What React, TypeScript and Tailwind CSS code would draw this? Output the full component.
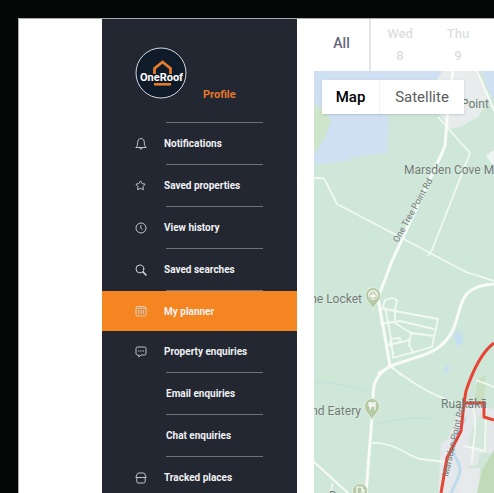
import React from "react";
import { Star } from "lucide-react";

type MenuItem = {
  label: string;
  icon?: React.ReactNode;
  active?: boolean;
  sub?: boolean;
};

const BellIcon = () => (
  <svg width="12" height="12" viewBox="0 0 12 12" fill="none" stroke="currentColor" strokeWidth="0.9" strokeLinejoin="round">
    <path d="M6 .6C3.500.6 2.700 2.500 2.700 4.500c0 2.500-.7 3.800-1.900 5h10.400c-1.200-1.200-1.900-2.500-1.900-5C9.300 2.500 8.500.6 6 .6z" />
    <path d="M4.800 9.700q.2 1.500 1.200 1.500t1.200-1.500" />
  </svg>
);

const ClockIcon = () => (
  <svg width="12" height="12" viewBox="0 0 12 12" fill="none" stroke="currentColor" strokeWidth="0.9">
    <circle cx="6" cy="6" r="5" />
    <path d="M5.800 3.200V6.200l1.600 1.300" />
  </svg>
);

const SearchIcon = () => (
  <svg width="12" height="12" viewBox="0 0 12 12" fill="none" stroke="currentColor" strokeLinecap="round">
    <circle cx="4.900" cy="4.900" r="3.900" strokeWidth="1" />
    <path d="M7.900 7.900 11 11" strokeWidth="1.500" />
  </svg>
);

const PlannerIcon = () => (
  <svg width="12" height="12" viewBox="0 0 12 12" fill="none" stroke="currentColor" strokeWidth="0.9">
    <rect x="1" y="1.500" width="10" height="9.500" rx="1.500" />
    <path d="M1 3.300h10M3.700 5v4M6 5v4M8.300 5v4" />
  </svg>
);

const ChatIcon = () => (
  <svg width="12" height="12" viewBox="0 0 12 12" fill="none" stroke="currentColor" strokeWidth="0.9">
    <path d="M2.500 1h7A1.500 1.500 0 0 1 11 2.500v5A1.500 1.500 0 0 1 9.500 9H6L3.800 11V9H2.500A1.500 1.500 0 0 1 1 7.500v-5A1.500 1.500 0 0 1 2.500 1z" />
    <path d="M3 5h1.400M5.300 5h1.400M7.600 5H9" />
  </svg>
);

const PlacesIcon = () => (
  <svg width="12" height="12" viewBox="0 0 12 12" fill="none" stroke="currentColor" strokeWidth="0.9">
    <path d="M.8 5.500 2.200 2Q2.600 1 3.600 1h4.800q1 0 1.400 1l1.400 3.500zM1.800 6v3.500Q1.800 11 3.200 11h5.600q1.400 0 1.400-1.500V6" />
  </svg>
);

const menu: MenuItem[] = [
  { label: "Notifications", icon: <BellIcon /> },
  { label: "Saved properties", icon: <Star size={11} strokeWidth={2} /> },
  { label: "View history", icon: <ClockIcon /> },
  { label: "Saved searches", icon: <SearchIcon /> },
  { label: "My planner", icon: <PlannerIcon />, active: true },
  { label: "Property enquiries", icon: <ChatIcon /> },
  { label: "Email enquiries", sub: true },
  { label: "Chat enquiries", sub: true },
  { label: "Tracked places", icon: <PlacesIcon /> },
];

const days = [
  { name: "Wed", date: 8 },
  { name: "Thu", date: 9 },
];

const Logo = () => (
  <svg width="52" height="52" viewBox="0 0 52 52" role="img" aria-label="OneRoof">
    <circle cx="26" cy="26" r="25" fill="#101b29" stroke="#d5d9df" strokeWidth="1" />
    <path d="M19.500 27v-5.500L27.500 15l8 6.500V27" fill="none" stroke="#e27c2c" strokeWidth="2.800" />
    <path d="M19 37.300h17" stroke="#e27c2c" strokeWidth="2.600" />
    <text x="26.500" y="33.500" textAnchor="middle" fontSize="11" fontWeight="700" fill="#fff">
      OneRoof
    </text>
  </svg>
);

const Sidebar = () => (
  <nav className="w-[195px] shrink-0 bg-[#222731] text-[10px] font-bold text-[#f1f1f3]">
    <div className="flex h-[103px] items-start gap-4 pt-7 pl-[33px]">
      <Logo />
      <a href="#profile" className="mt-10 text-[11px] leading-4 text-[#e5762a]">
        Profile
      </a>
    </div>
    <div className="mr-[34px] ml-16 border-b border-[#6c717b]" />
    <ul>
      {menu.map((item) => (
        <li key={item.label} className={item.active ? "bg-[#f58521]" : ""}>
          <a href="#" className={item.active ? "flex h-10 items-center pl-8" : "flex h-[41px] items-center pl-8"}>
            <span className="flex w-[30px] pl-px text-[#d4d6da]">{item.icon}</span>
            <span className={item.sub ? "pl-[2px]" : ""}>{item.label}</span>
          </a>
          {!item.active && <div className="mr-[34px] ml-16 border-b border-[#6c717b]" />}
        </li>
      ))}
    </ul>
  </nav>
);

const Pin = ({ x, y, children }: { x: number; y: number; children: React.ReactNode }) => (
  <g transform={`translate(${x} ${y})`}>
    <path d="M0 14.500C-1 9.500-7.500 6.500-7.500 0a7.500 7.500 0 0 1 15 0C7.500 6.500 1 9.500 0 14.500z" fill="#b5c9a5" stroke="#e6f0e2" />
    {children}
  </g>
);

const MapCanvas = () => (
  <svg className="absolute inset-0 h-full w-full" viewBox="314 71 180 422" preserveAspectRatio="xMinYMin slice">
    <rect x="314" y="71" width="600" height="800" fill="#cfe7d9" />
    {/* water */}
    <path d="M314 71h130l-9 15 3 24-49 4-2 39-32 4-10 4-31 4z" fill="#cfe0f3" />
    <path d="M314 104l9 6 8 10-5 16-12 19z" fill="#cfe5cb" />
    <path d="M482 71h12v28l-6-9z" fill="#cfe0f3" />
    <path d="M456 330l6 3 1 9-5 5-4-8zM446 365l4 1-2 8-4-2z" fill="#c4dff0" />
    {/* built up areas */}
    <path d="M435 84l7-13h34l14 26-12 20-18 10-11 2-7-12-5-6z" fill="#e8ecec" />
    <path d="M486 156l8-6v16z" fill="#f1f4f4" />
    <path d="M463 402l31 7v44l-15 0-1 11-10 3-6 26h-24l3-50 6-3z" fill="#e4e8ea" />
    <path d="M468 438l10-22 10-4-2 38-17-5z" fill="#d4e7dc" />
    <path d="M463 468h17l-1 25h-21z" fill="#e6eaeb" />
    <path d="M494 450l-12 20-5 23h17z" fill="#bfdbb8" />
    <path d="M478 379l8-4-2 28-10-1z" fill="#c8dfc2" />
    <path d="M465 417c-2 12-15 21-12 35 4 9 10 14 5 26l-7 15" fill="none" stroke="#bcdcec" strokeWidth="3" />
    <path d="M314 383c20-2 37 3 54 10M374 425c20-6 41-8 60-6" fill="none" stroke="#c1e1dc" strokeWidth="1" />
    {/* minor roads */}
    <g fill="none" stroke="#f1f9f0" strokeWidth="1.800" strokeLinejoin="round">
      <path d="M314 178h9l3 4 11 22 61 32 68 36 28 9" />
      <path d="M438 117l32 36-38 97-4 6" />
      <path d="M379 308l59 11-6 28-39 11-2-20-6-31M380 324l20-3 34 8M395 309v14l16 10 24 3M411 333l-2 12 5 9M388 345l22-5M394 354l-4-10 1-5 9-1v4M382 309l3-9 7-2 5 2-2 10" />
      <path d="M391 366l10 9M391 367c17 12 31 24 67 37M372 443c23-1 34 12 48 16l26 3" />
      <path d="M476 380l18 7M471 404c9 20 1 38 1 59M486 405l-1 46M330 493l3-10M464 446l21 5" />
    </g>
    {/* main roads */}
    <g fill="none" stroke="#f8fbf7" strokeWidth="3" strokeLinecap="round" strokeLinejoin="round">
      <path d="M453 71l-6 49-2 26-3 7-50 108-14 37 12 68c-18 12-17 21-17 39l-7 88" />
      <path d="M494 284c-36 2-31 21-41 46-13 26-35 25-62 36l-12 7" />
      <path d="M477 71l17 39M314 462l34 31" strokeWidth="2" />
    </g>
    {/* planned route */}
    <path d="M494 343c-11 8-20 24-28 48l-2 12-3 28-14 27-6 35M464 403h20v14l10 3" fill="none" stroke="#e64535" strokeWidth="3" strokeLinejoin="round" />
    <Pin x={373} y={295}>
      <circle r="5" fill="#eef3e8" />
      <path d="M-3-1h6v4h-6zM-1.500-1v-2h3v2" fill="#fff" stroke="#b5c9a5" strokeWidth="1" />
    </Pin>
    <Pin x={372} y={406}>
      <path d="M-3-4v3q0 2 1.500 2V4M-1.500-4v4M0-4v3q0 2-1.500 2M3-4v8M3-4q-2 1-2 4h2" fill="none" stroke="#fff" strokeWidth="1.200" />
    </Pin>
    <Pin x={360} y={491}>
      <path d="M-3-4h5v8h-5zM2-2l2 1v4" fill="none" stroke="#fff" strokeWidth="1.200" />
    </Pin>
    <g fill="#727a78" fontSize="12" stroke="#dcede2" strokeWidth="1" paintOrder="stroke">
      <text x="461" y="108">Point</text>
      <text x="404" y="174">Marsden Cove M</text>
      <text x="362" y="303" textAnchor="end">ne Locket</text>
      <text x="361" y="415" textAnchor="end">nd Eatery</text>
      <text x="329" y="500">D</text>
      <text transform="translate(398 243) rotate(-61)" fontSize="9">One Tree Point Rd</text>
    </g>
    <text x="441" y="408" fontSize="12" fill="#727a78">Ruakākā</text>
    <text transform="translate(448 477) rotate(-77)" fontSize="9" fill="#727a78">Marsden Point Rd</text>
  </svg>
);

const Planner = () => (
  <main className="flex min-w-0 flex-1 flex-col pl-[17px]">
    <div className="flex h-[52px] shrink-0 overflow-hidden text-[13px] font-medium">
      <button className="w-[57px] shrink-0 border-r-2 border-[#e5e5e8] pb-1 text-sm text-[#68667d]">All</button>
      {days.map((day) => (
        <button key={day.name} className="flex w-[58px] shrink-0 flex-col items-center pt-1 leading-[22px] text-[#dededf]">
          <span>{day.name}</span>
          <span>{day.date}</span>
        </button>
      ))}
    </div>
    <section className="relative flex-1 overflow-hidden">
      <MapCanvas />
      <div className="absolute top-[9px] left-2 flex h-[34px] bg-white text-[15px] shadow">
        <button className="w-[58px] border-r border-gray-100 font-medium text-black">Map</button>
        <button className="w-[84px] text-[#5d5d5d]">Satellite</button>
      </div>
    </section>
  </main>
);

const App: React.FC = () => {
  return (
    <div className="flex h-screen overflow-hidden bg-[#040706] pt-[18px] pl-[18px] font-['Roboto',sans-serif]">
      <div className="flex min-w-0 flex-1 border-t border-l border-[#a9adab] bg-white pl-[83px]">
        <Sidebar />
        <Planner />
      </div>
    </div>
  );
};

export default App;
